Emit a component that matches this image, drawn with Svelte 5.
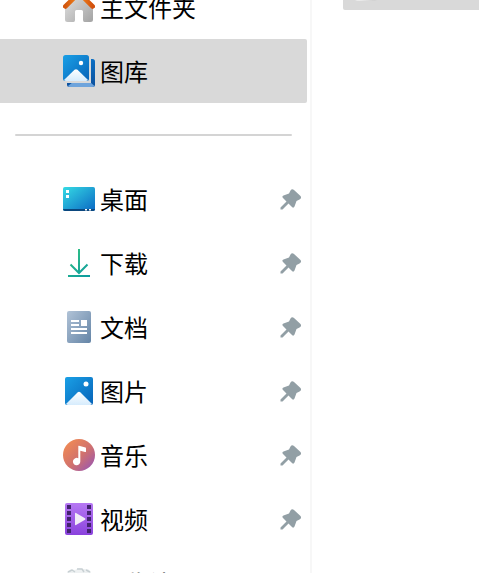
<script>
  const pinned = [
    { name: '桌面', icon: 'desktop' },
    { name: '下载', icon: 'download' },
    { name: '文档', icon: 'document' },
    { name: '图片', icon: 'picture' },
    { name: '音乐', icon: 'music' },
    { name: '视频', icon: 'video' }
  ];
</script>

{#snippet icon(kind)}
  <svg class="icon" viewBox="0 0 32 32" aria-hidden="true">
    {#if kind === 'home'}
      <path d="M2 13 16 2 30 13V28.500Q30 31 27.500 31H21.500Q20 31 20 29V20.500Q20 19 18.500 19H13.500Q12 19 12 20.500V29Q12 31 10.500 31H4.500Q2 31 2 28.500Z" fill="url(#wall)" />
      <path d="M2.300 15.500 16 2 29.700 15.500" fill="none" stroke="url(#roof)" stroke-width="4.600" stroke-linecap="round" stroke-linejoin="round" />
    {:else if kind === 'gallery'}
      <rect x="4" y="4" width="28" height="28" rx="2.500" fill="url(#back)" />
      <path d="M5 31 10 27H27L31.500 31Q31 32 29 32H7Q5 32 5 31Z" fill="#6ea4dc" />
      <path d="M0 2H28V28H2Q0 27 0 25Z" fill="#d9d9d9" />
      <rect width="26" height="26" rx="2.500" fill="url(#sky)" />
      <circle cx="18" cy="8" r="2.200" fill="#fff" />
      <path d="M1 25 11.500 14.800Q13 13.500 14.500 14.800L25 25Q24 26 23 26H3Q2 26 1 25Z" fill="url(#hill)" />
    {:else if kind === 'desktop'}
      <rect y="4" width="32" height="24" rx="1.800" fill="url(#screen)" />
      <path d="M0 26H32Q32 28 30 28H2Q0 28 0 26Z" fill="#0b477e" />
      <path d="M3 7h3v3H3zM3 12h3v3H3zM22 26h2v1.500h-2zM26 26h2v1.500h-2z" fill="#fff" />
    {:else if kind === 'download'}
      <path d="M16 2V26M7.500 17.500 16 26 24.500 17.500M5 29H27" fill="none" stroke="url(#green)" stroke-width="2" />
    {:else if kind === 'document'}
      <rect x="4" width="24" height="32" rx="2" fill="url(#paper)" />
      <path d="M8 9h8v2H8zM8 13h8v2H8zM8 17h16v2H8zM8 21h16v2H8zM18 9h6v6h-6z" fill="#fff" />
    {:else if kind === 'picture'}
      <rect x="2" y="2" width="28" height="28" rx="2" fill="url(#sky)" />
      <circle cx="23" cy="9" r="2.500" fill="#fff" />
      <path d="M3 29 14.500 17.500Q16 16 17.500 17.500L29 29Q28 30 27 30H5Q4 30 3 29Z" fill="url(#hill)" />
    {:else if kind === 'music'}
      <circle cx="16" cy="16" r="16" fill="url(#disc)" />
      <path d="M15.300 7Q15.300 6.500 16 6.700L22.500 8.500Q23 8.700 23 9.500V12.500Q23 13.300 22 13L17.300 11.800V22.500A3.700 3.700 0 1 1 15.300 19.300Z" fill="#fff" />
    {:else if kind === 'video'}
      <rect x="2" width="28" height="32" rx="2" fill="url(#film)" />
      <path d="M4 2h4v4H4zM4 8h4v4H4zM4 14h4v4H4zM4 20h4v4H4zM4 26h4v4H4zM24 2h4v4h-4zM24 8h4v4h-4zM24 14h4v4h-4zM24 20h4v4h-4zM24 26h4v4h-4z" fill="#43236f" />
      <path d="M12 10.500Q12 9.500 13 10L22 15.300Q23 16 22 16.700L13 22Q12 22.500 12 21.500Z" fill="#f1ecf7" />
    {:else}
      <path d="M4 5 8 2 12 3 16 1 20 2 25 2 28 5 26 30H6Z" fill="#eef1f2" />
      <path d="m5 5 4-2 3 2M14 2l5 0 2 3M23 3l4 2" fill="none" stroke="#c8d0d3" stroke-width="1.500" />
    {/if}
  </svg>
{/snippet}

<svg class="defs" aria-hidden="true">
  <defs>
    <linearGradient id="wall" x1="0" y1="0" x2="1" y2="1"><stop stop-color="#e4e4e4" /><stop offset="1" stop-color="#a3a3a3" /></linearGradient>
    <linearGradient id="roof"><stop stop-color="#d2560d" /><stop offset=".5" stop-color="#f58a20" /><stop offset="1" stop-color="#d2510d" /></linearGradient>
    <linearGradient id="sky" x1="0" y1="0" x2="1" y2="1"><stop stop-color="#1aa0e6" /><stop offset="1" stop-color="#0763b8" /></linearGradient>
    <linearGradient id="back" x1="0" y1="0" x2="0" y2="1"><stop stop-color="#0b6fc4" /><stop offset="1" stop-color="#0c4f9c" /></linearGradient>
    <linearGradient id="hill" x1="0" y1="0" x2="0" y2="1"><stop stop-color="#fff" /><stop offset="1" stop-color="#d6ecfd" /></linearGradient>
    <linearGradient id="screen" x1="0" y1="0" x2="1" y2="1"><stop stop-color="#35dbe4" /><stop offset="1" stop-color="#0b68c4" /></linearGradient>
    <linearGradient id="green" gradientUnits="userSpaceOnUse" x1="5" y1="3" x2="27" y2="29"><stop stop-color="#35c481" /><stop offset="1" stop-color="#0b9aa0" /></linearGradient>
    <linearGradient id="paper" x1="0" y1="0" x2="1" y2="1"><stop stop-color="#b1c3d7" /><stop offset="1" stop-color="#6484a6" /></linearGradient>
    <linearGradient id="disc" x1="0" y1="0" x2="1" y2="1"><stop offset=".1" stop-color="#f08a54" /><stop offset=".55" stop-color="#d0716e" /><stop offset=".95" stop-color="#9755b4" /></linearGradient>
    <linearGradient id="film" x1="0" y1="0" x2="0" y2="1"><stop stop-color="#b678f3" /><stop offset="1" stop-color="#8a42dd" /></linearGradient>
    <linearGradient id="drive"><stop stop-color="#f4f4f4" /><stop offset="1" stop-color="#cbcbcb" /></linearGradient>
  </defs>
</svg>

<div class="explorer">
  <nav>
    <a href="#home">{@render icon('home')}<span>主文件夹</span></a>
    <a href="#gallery" class="selected" aria-current="page">{@render icon('gallery')}<span>图库</span></a>
    <hr />
    {#each pinned as item}
      <a href={`#${item.icon}`}>
        {@render icon(item.icon)}<span>{item.name}</span>
        <svg class="pin" viewBox="0 0 22 22" aria-hidden="true">
          <path d="M10.500 2.500Q12 .5 14 2L20.500 8Q22 10 19.500 11.500L16.500 13 14.500 18.500Q13.500 20.500 12 19L8.500 15.500 2.500 21.500 .5 21.500 .5 19.500 6.500 13.500 3 10Q1.500 8.500 3.500 7.500L9 5.500Z" fill="#929fa5" />
        </svg>
      </a>
    {/each}
    <a href="#recycle">{@render icon('recycle')}<span>回收站</span></a>
  </nav>
  <main>
    <div class="tile">
      <svg class="edge" viewBox="0 0 22 2" aria-hidden="true"><path d="M0 0H22Q20 1 17 1H5Q2 1 0 0Z" fill="url(#drive)" /></svg>
    </div>
  </main>
</div>

<style>
  :global(body) {
    margin: 0;
    background: #fff;
  }
  .defs {
    position: absolute;
    width: 0;
    height: 0;
  }
  .explorer {
    display: flex;
    height: 100vh;
    overflow: hidden;
    font: 24px/32px 'Noto Sans CJK SC', sans-serif;
  }
  nav {
    flex: 0 0 calc(65% + 1px);
    box-sizing: border-box;
    margin-top: -25px;
    padding-right: 3px;
    border-right: 2px solid #f7f7f7;
  }
  a {
    display: flex;
    align-items: center;
    gap: 5px;
    height: 64px;
    box-sizing: border-box;
    padding: 0 5px 0 63px;
    border-radius: 0 2px 2px 0;
    color: #000;
    text-decoration: none;
  }
  .selected {
    background: #d9d9d9;
  }
  .icon {
    flex: none;
    width: 32px;
    height: 32px;
  }
  .pin {
    width: 22px;
    height: 22px;
    margin-left: auto;
  }
  hr {
    height: 2px;
    margin: 31px 15px;
    border: 0;
    border-radius: 1px;
    background: #d4d4d4;
  }
  main {
    flex: 1;
    padding-left: 31px;
  }
  .tile {
    height: 10px;
    padding-left: 12px;
    border-radius: 0 0 0 2px;
    background: #d9d9d9;
  }
  .edge {
    display: block;
    width: 22px;
    height: 2px;
  }
</style>
